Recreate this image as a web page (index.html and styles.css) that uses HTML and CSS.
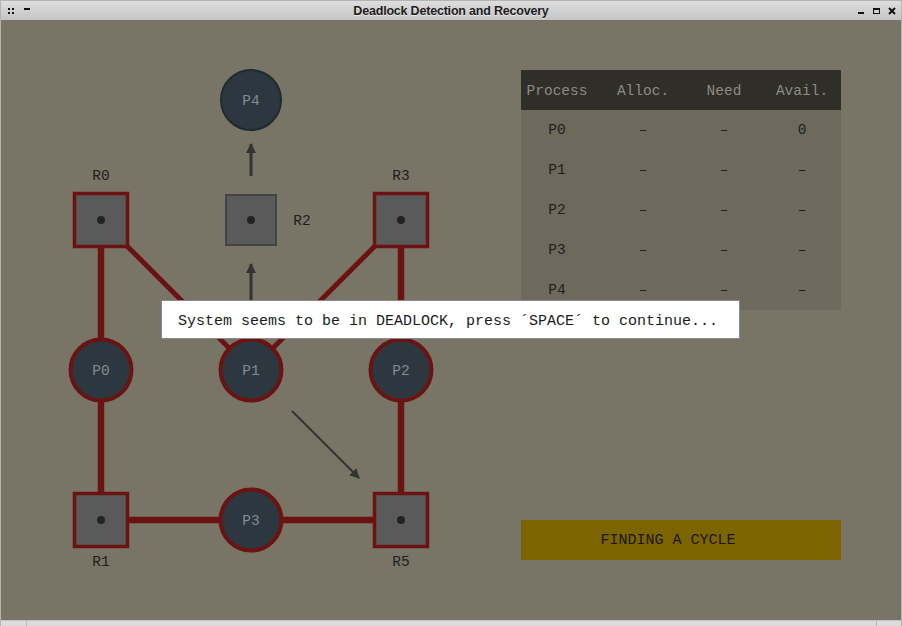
FILE: index.html
```html
<!DOCTYPE html>
<html>
<head>
<meta charset="utf-8">
<title>Deadlock Detection and Recovery</title>
<link rel="stylesheet" href="styles.css">
</head>
<body>
<div class="window">
  <div class="titlebar">
    <div class="tb-left">
      <svg class="tb-icon" width="34" height="19" viewBox="0 0 34 19">
        <rect x="7" y="7" width="2" height="2" fill="#111"/>
        <rect x="11" y="7" width="2" height="2" fill="#111"/>
        <rect x="7" y="11" width="2" height="2" fill="#111"/>
        <rect x="11" y="11" width="2" height="2" fill="#111"/>
        <rect x="23" y="7" width="6" height="2" fill="#111"/>
      </svg>
    </div>
    <div class="title">Deadlock Detection and Recovery</div>
    <div class="tb-right">
      <svg class="tb-icon" width="60" height="19" viewBox="0 0 60 19">
        <rect x="17" y="11" width="6" height="2" fill="#111"/>
        <rect x="32.5" y="7.5" width="6" height="5" fill="none" stroke="#111" stroke-width="1"/>
        <rect x="32" y="7" width="7" height="2" fill="#111"/>
        <path d="M48 7 L54 13 M54 7 L48 13" stroke="#111" stroke-width="2"/>
      </svg>
    </div>
  </div>
  <div class="content">
    <svg class="graph" width="500" height="600" viewBox="1 20 500 600">
      <defs>
        <marker id="ah" viewBox="0 0 10 10" refX="9" refY="5" markerWidth="10" markerHeight="10" markerUnits="userSpaceOnUse" orient="auto">
          <path d="M0 0 L10 5 L0 10 Z" fill="#333"/>
        </marker>
      </defs>
      <g class="edge">
        <line x1="101" y1="220" x2="101" y2="370"/>
        <line x1="401" y1="220" x2="401" y2="370"/>
        <line x1="101" y1="370" x2="101" y2="520"/>
        <line x1="401" y1="370" x2="401" y2="520"/>
        <line x1="101" y1="520" x2="401" y2="520"/>
      </g>
      <g class="edge thin">
        <line x1="101" y1="220" x2="251" y2="370"/>
        <line x1="401" y1="220" x2="251" y2="370"/>
      </g>
      <line class="arrow" x1="251" y1="176" x2="251" y2="144" marker-end="url(#ah)"/>
      <line class="arrow" x1="251" y1="338" x2="251" y2="264" marker-end="url(#ah)"/>
      <line class="arrow thin" x1="292" y1="411" x2="359" y2="478" marker-end="url(#ah)"/>

      <circle class="proc free" cx="251" cy="100" r="30"/>
      <text class="plabel" x="251" y="105">P4</text>

      <rect class="res held" x="74.5" y="193.5" width="53" height="53"/>
      <circle class="dot" cx="101" cy="220" r="4"/>
      <rect class="res free" x="226" y="195" width="50" height="50"/>
      <circle class="dot" cx="251" cy="220" r="4"/>
      <rect class="res held" x="374.5" y="193.5" width="53" height="53"/>
      <circle class="dot" cx="401" cy="220" r="4"/>
      <rect class="res held" x="74.5" y="493.5" width="53" height="53"/>
      <circle class="dot" cx="101" cy="520" r="4"/>
      <rect class="res held" x="374.5" y="493.5" width="53" height="53"/>
      <circle class="dot" cx="401" cy="520" r="4"/>

      <circle class="proc dl" cx="101" cy="370" r="30.5"/>
      <text class="plabel" x="101" y="375">P0</text>
      <circle class="proc dl" cx="251" cy="370" r="30.5"/>
      <text class="plabel" x="251" y="375">P1</text>
      <circle class="proc dl" cx="401" cy="370" r="30.5"/>
      <text class="plabel" x="401" y="375">P2</text>
      <circle class="proc dl" cx="251" cy="520" r="30.5"/>
      <text class="plabel" x="251" y="525">P3</text>

      <text class="rlabel" x="101" y="180">R0</text>
      <text class="rlabel" x="302" y="225">R2</text>
      <text class="rlabel" x="401" y="180">R3</text>
      <text class="rlabel" x="101" y="566">R1</text>
      <text class="rlabel" x="401" y="566">R5</text>
    </svg>

    <div class="side">
      <div class="table">
        <div class="row head">
          <span>Process</span><span>Alloc.</span><span>Need</span><span class="last">Avail.</span>
        </div>
        <div class="row"><span>P0</span><span>–</span><span>–</span><span class="last">0</span></div>
        <div class="row"><span>P1</span><span>–</span><span>–</span><span class="last">–</span></div>
        <div class="row"><span>P2</span><span>–</span><span>–</span><span class="last">–</span></div>
        <div class="row"><span>P3</span><span>–</span><span>–</span><span class="last">–</span></div>
        <div class="row"><span>P4</span><span>–</span><span>–</span><span class="last">–</span></div>
      </div>
      <div class="banner">FINDING A CYCLE</div>
    </div>

    <div class="dialog">System seems to be in DEADLOCK, press ´SPACE´ to continue...</div>
  </div>
  <div class="statusbar">
    <span class="seg s1"></span><span class="seg s2"></span><span class="seg s3"></span>
  </div>
</div>
</body>
</html>
```
FILE: styles.css
```css
html, body {
  margin: 0;
  padding: 0;
  background: #787566;
}

.window {
  width: 902px;
  height: 626px;
  box-sizing: border-box;
  border: 1px solid #b4b4b4;
  border-bottom: none;
  display: flex;
  flex-direction: column;
  overflow: hidden;
  font-family: "Liberation Mono", "DejaVu Sans Mono", monospace;
}

.titlebar {
  height: 19px;
  flex: none;
  display: flex;
  align-items: center;
  background: linear-gradient(#dedede, #c4c4c4);
}

.tb-left,
.tb-right {
  width: 60px;
  height: 19px;
  position: relative;
  flex: none;
}

.tb-icon {
  position: absolute;
  left: 0;
  top: 0;
  display: block;
}

.title {
  flex: 1;
  text-align: center;
  font-family: "Liberation Sans", Arial, sans-serif;
  font-weight: bold;
  font-size: 12.5px;
  letter-spacing: -0.2px;
  color: #1c1c1c;
  text-shadow: 0 1px 0 rgba(255,255,255,0.6);
}

.content {
  flex: none;
  height: 600px;
  display: flex;
  position: relative;
  background: #787566;
}

.graph {
  flex: none;
  display: block;
}

.edge line {
  stroke: #6b1313;
  stroke-width: 6.5;
}

.edge.thin line {
  stroke-width: 5;
}

.arrow {
  stroke: #333333;
  stroke-width: 3;
}

.arrow.thin {
  stroke-width: 2;
}

.proc {
  fill: #2d3740;
}

.proc.free {
  stroke: #1f2a31;
  stroke-width: 2;
}

.proc.dl {
  stroke: #6b1313;
  stroke-width: 4;
}

.res {
  fill: #5a5a5a;
}

.res.held {
  stroke: #6b1313;
  stroke-width: 3.5;
}

.res.free {
  stroke: #444444;
  stroke-width: 2;
}

.dot {
  fill: #222222;
}

.plabel {
  font-family: "Liberation Mono", "DejaVu Sans Mono", monospace;
  font-size: 14.5px;
  fill: #838a90;
  text-anchor: middle;
}

.rlabel {
  font-family: "Liberation Mono", "DejaVu Sans Mono", monospace;
  font-size: 14.5px;
  fill: #1e1e1e;
  text-anchor: middle;
}

.side {
  flex: none;
  margin-left: 20px;
  padding-top: 50px;
  display: flex;
  flex-direction: column;
}

.table {
  width: 320px;
  background: #6d6a5d;
}

.row {
  display: grid;
  grid-template-columns: 72px 100px 62px 86px;
  height: 40px;
  align-items: center;
  font-size: 14.5px;
  color: #1e1e1e;
}

.row span {
  text-align: center;
}

.row span.last {
  padding-left: 8px;
}

.row.head {
  background: #302e28;
  color: #8c8b84;
  padding-top: 2px;
  box-sizing: border-box;
}

.banner {
  margin-top: 210px;
  width: 320px;
  height: 40px;
  box-sizing: border-box;
  padding-right: 26px;
  background: #7c6400;
  color: #1a170c;
  font-size: 15px;
  display: flex;
  align-items: center;
  justify-content: center;
}

.dialog {
  position: absolute;
  left: 160px;
  top: 280px;
  width: 579px;
  height: 39px;
  box-sizing: border-box;
  border: 1px solid #8a8a8a;
  background: #ffffff;
  color: #1a1a1a;
  font-size: 15px;
  padding-left: 16px;
  padding-top: 3px;
  display: flex;
  align-items: center;
  white-space: pre;
}

.statusbar {
  flex: none;
  height: 6px;
  border-top: 1px solid #c4c4c4;
  background: #dcdcdc;
  display: flex;
}

.seg {
  height: 100%;
}

.s1 {
  width: 25px;
  border-right: 1px solid #b8b8b8;
}

.s2 {
  width: 849px;
  border-right: 1px solid #b8b8b8;
}

.s3 {
  flex: 1;
}
```
